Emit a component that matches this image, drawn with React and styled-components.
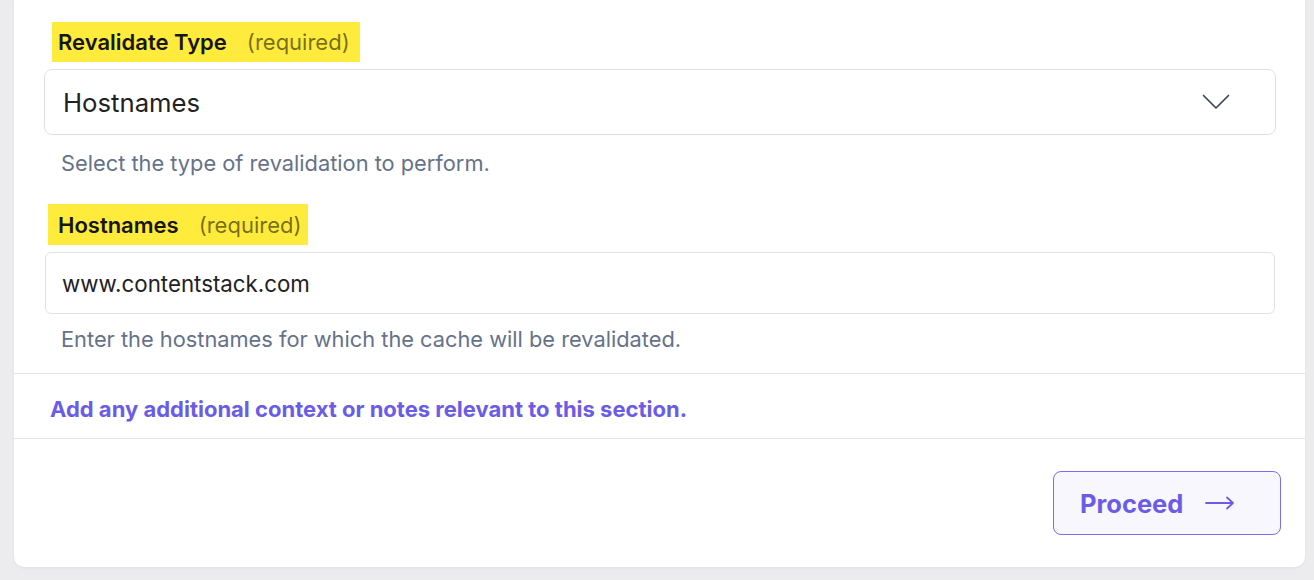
import React from 'react'
import styled, { createGlobalStyle } from 'styled-components'

const GlobalStyle = createGlobalStyle`
    html, body {
        margin: 0;
        padding: 0;
        background: #ececef;
        font-family: Inter, "Noto Sans", "Liberation Sans", sans-serif;
    }
`

function ChevronDown() {
    return (
        <svg width="28" height="16" viewBox="0 0 28 16" fill="none">
            <path d="M1.5 1.5 L14 14 L26.5 1.5" stroke="#3f4759" strokeWidth="1.7" strokeLinecap="round" strokeLinejoin="round" />
        </svg>
    )
}

function ArrowRight() {
    return (
        <svg width="30" height="14" viewBox="0 0 30 14" fill="none">
            <path d="M1 7 H28 M22 1.5 L28 7 L22 12.5" stroke="#6b5ce7" strokeWidth="1.8" strokeLinecap="round" strokeLinejoin="round" />
        </svg>
    )
}

function App() {
    return (
        <Page>
            <GlobalStyle />
            <Card>
                <Fields>
                    <Label inset={8} padLeft={6} padRight={10}>
                        Revalidate Type
                        <Required>(required)</Required>
                    </Label>
                    <Select>
                        <span>Hostnames</span>
                        <ChevronDown />
                    </Select>
                    <Help top={14}>Select the type of revalidation to perform.</Help>

                    <Label inset={4} padLeft={10} padRight={7} spaced>
                        Hostnames
                        <Required>(required)</Required>
                    </Label>
                    <Input>www.contentstack.com</Input>
                    <Help top={11}>Enter the hostnames for which the cache will be revalidated.</Help>
                </Fields>

                <Notes>Add any additional context or notes relevant to this section.</Notes>

                <Footer>
                    <ProceedButton>
                        Proceed
                        <ArrowRight />
                    </ProceedButton>
                </Footer>
            </Card>
        </Page>
    )
}

export default App

const Page = styled.div`
    padding: 0 9px 13px 14px;
    background: #ececef;
`
const Card = styled.div`
    background: #ffffff;
    border-radius: 0 0 10px 10px;
    box-shadow: 0 1px 3px rgba(20, 24, 40, 0.06);
`
const Fields = styled.div`
    display: flex;
    flex-direction: column;
    padding: 22px 29px 20px 30px;
    border-bottom: 1px solid #e2e5ee;
`
const Label = styled.div`
    align-self: flex-start;
    display: flex;
    align-items: center;
    gap: 20px;
    height: ${p => (p.spaced ? '41px' : '40px')};
    margin: ${p => (p.spaced ? '27px' : '0')} 0 7px ${p => p.inset}px;
    padding: 0 ${p => p.padRight}px 0 ${p => p.padLeft}px;
    background: #feeb3c;
    color: #161616;
    font-size: 22px;
    font-weight: 600;
`
const Required = styled.span`
    color: rgba(0, 0, 0, 0.55);
    font-weight: 400;
`
const Select = styled.div`
    display: flex;
    align-items: center;
    justify-content: space-between;
    height: 64px;
    padding: 0 45px 0 18px;
    border: 1px solid #dde1ea;
    border-radius: 8px;
    color: #222;
    font-size: 25.7px;
`
const Input = styled.div`
    display: flex;
    align-items: center;
    height: 60px;
    margin: 0 1px;
    padding: 0 16px;
    border: 1px solid #dfe1e6;
    border-radius: 6px;
    color: #222;
    font-size: 22.3px;
`
const Help = styled.div`
    margin: ${p => p.top}px 0 0 17px;
    line-height: 28px;
    color: #65728a;
    font-size: 21.8px;
`
const Notes = styled.div`
    padding: 21px 36px 15px;
    line-height: 28px;
    border-bottom: 1px solid #e2e5ee;
    color: #6b5ce7;
    font-size: 22px;
    font-weight: 700;
`
const Footer = styled.div`
    display: flex;
    justify-content: flex-end;
    padding: 32px 24px 32px;
`
const ProceedButton = styled.button`
    display: flex;
    align-items: center;
    gap: 22px;
    width: 228px;
    height: 64px;
    padding: 0 0 0 26px;
    border: 1px solid #7a6df0;
    border-radius: 8px;
    background: #f8f7fe;
    color: #6b5ce7;
    font-family: inherit;
    font-size: 25.5px;
    font-weight: 700;
    cursor: pointer;
`
